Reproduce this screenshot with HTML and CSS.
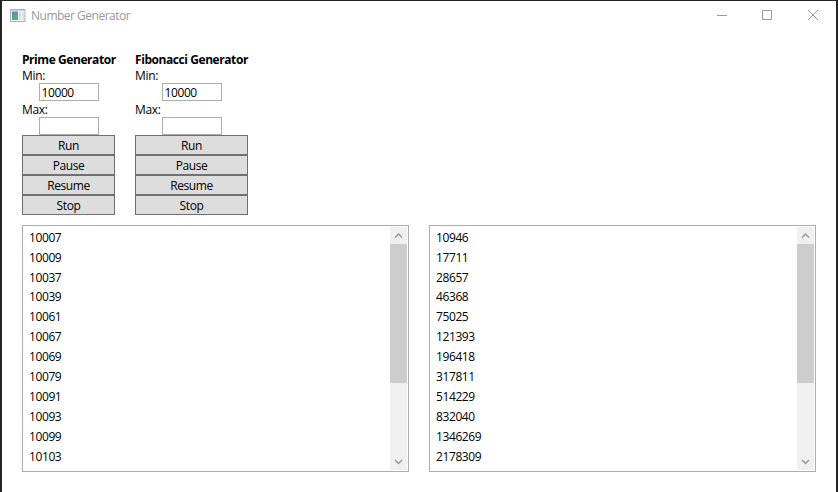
FILE: index.html
```html
<!DOCTYPE html>
<html lang="en">
<head>
<meta charset="utf-8">
<title>Number Generator</title>
<link rel="stylesheet" href="styles.css">
</head>
<body>
<div class="window">
  <header class="titlebar">
    <svg class="app-icon" width="16" height="14" viewBox="0 0 16 14">
      <defs><linearGradient id="pane" x1="0" y1="0" x2="0.6" y2="1"><stop offset="0" stop-color="#5c84ac"/><stop offset="1" stop-color="#5fae94"/></linearGradient></defs>
      <rect x="0.500" y="0.500" width="14.500" height="12" fill="#f2f4f4" stroke="#aeb4b7"/>
      <path d="M1 1.500H15" stroke="#c9ced0"/>
      <rect x="2" y="2.500" width="6" height="8.500" fill="url(#pane)"/>
      <rect x="9" y="3" width="2" height="8" fill="#d5dfe4"/>
      <rect x="12" y="3" width="2" height="8" fill="#dce2e5"/>
    </svg>
    <h1 class="title">Number Generator</h1>
    <div class="caption-buttons">
      <svg width="46" height="29" viewBox="0 0 46 29"><path d="M18 14.500H28" /></svg>
      <svg width="46" height="29" viewBox="0 0 46 29"><path d="M17.500 9.500H26.500V18.500H17.500Z" /></svg>
      <svg width="46" height="29" viewBox="0 0 46 29"><path d="M17 9L27 19M27 9L17 19" /></svg>
    </div>
  </header>
  <main class="content">
    <div class="generators">
      <section class="generator prime">
        <h2>Prime Generator</h2>
        <label for="pmin">Min:</label>
        <input id="pmin" type="text" value="10000">
        <label for="pmax">Max:</label>
        <input id="pmax" type="text">
        <button>Run</button><button>Pause</button><button>Resume</button><button>Stop</button>
      </section>
      <section class="generator fibonacci">
        <h2>Fibonacci Generator</h2>
        <label for="fmin">Min:</label>
        <input id="fmin" type="text" value="10000">
        <label for="fmax">Max:</label>
        <input id="fmax" type="text">
        <button>Run</button><button>Pause</button><button>Resume</button><button>Stop</button>
      </section>
    </div>
    <div class="results">
      <div class="listbox">
        <ul><li>10007</li><li>10009</li><li>10037</li><li>10039</li><li>10061</li><li>10067</li><li>10069</li><li>10079</li><li>10091</li><li>10093</li><li>10099</li><li>10103</li></ul>
        <div class="scrollbar">
          <svg width="17" height="17" viewBox="0 0 17 17"><path d="M5 10.500L8.500 7L12 10.500"/></svg>
          <div class="thumb"></div>
          <svg width="17" height="17" viewBox="0 0 17 17"><path d="M5 7L8.500 10.500L12 7"/></svg>
        </div>
      </div>
      <div class="listbox">
        <ul><li>10946</li><li>17711</li><li>28657</li><li>46368</li><li>75025</li><li>121393</li><li>196418</li><li>317811</li><li>514229</li><li>832040</li><li>1346269</li><li>2178309</li></ul>
        <div class="scrollbar">
          <svg width="17" height="17" viewBox="0 0 17 17"><path d="M5 10.500L8.500 7L12 10.500"/></svg>
          <div class="thumb"></div>
          <svg width="17" height="17" viewBox="0 0 17 17"><path d="M5 7L8.500 10.500L12 7"/></svg>
        </div>
      </div>
    </div>
  </main>
</div>
</body>
</html>
```
FILE: styles.css
```css
* { box-sizing: border-box; }

body {
  margin: 0;
  background: #fff;
  color: #000;
  font: 12px/16px "Open Sans", "Noto Sans", sans-serif;
  letter-spacing: -0.4px;
}

h1, h2, ul { margin: 0; padding: 0; font-size: inherit; }

.window {
  height: 492px;
  overflow: hidden;
  border: solid #242428;
  border-width: 1px 2px 0;
}

.titlebar {
  display: flex;
  height: 29px;
  align-items: center;
  padding-left: 8px;
}

.app-icon { margin-right: 5px; }

.title {
  flex: 1;
  color: #999;
  font-weight: 400;
  letter-spacing: -0.5px;
}

.caption-buttons { display: flex; margin-right: -1px; }

.caption-buttons svg { fill: none; stroke: #999; }

.content { padding: 21px 20px 0; }

.generators { display: flex; gap: 20px; }

.generator {
  display: flex;
  flex-direction: column;
  height: 164px;
}

.prime { width: 93px; }
.fibonacci { width: 113px; }

h2 {
  height: 17px;
  line-height: 17px;
  font-weight: 700;
  white-space: nowrap;
  letter-spacing: -0.43px;
}

.generator label { height: 15px; line-height: 16px; letter-spacing: -0.3px; }
.generator input + label { height: 16px; line-height: 18px; }

.generator input {
  align-self: center;
  width: 60px;
  height: 18px;
  padding: 1px 2px 0;
  border: 1px solid #abadb3;
  background: #fff;
  color: inherit;
  font: inherit;
  letter-spacing: inherit;
}

.generator button {
  height: 20px;
  padding: 1px 0 0;
  border: 1px solid #707070;
  border-radius: 0;
  background: #ddd;
  color: inherit;
  font: inherit;
  letter-spacing: -0.4px;
}

.results {
  display: grid;
  grid-template-columns: 387px 387px;
  gap: 20px;
  margin-top: 10px;
}

.listbox {
  display: flex;
  justify-content: space-between;
  height: 247px;
  padding: 1px;
  border: 1px solid #abadb3;
}

.listbox ul { padding: 0.6px 0 0 5px; list-style: none; }

.listbox li { height: 19.96px; line-height: 20px; }

.scrollbar {
  display: flex;
  flex-direction: column;
  width: 17px;
  background: #f0f0f0;
}

.scrollbar svg { fill: none; stroke: #999; stroke-width: 1.5; }

.thumb { height: 139px; margin-bottom: auto; background: #cdcdcd; }
```
